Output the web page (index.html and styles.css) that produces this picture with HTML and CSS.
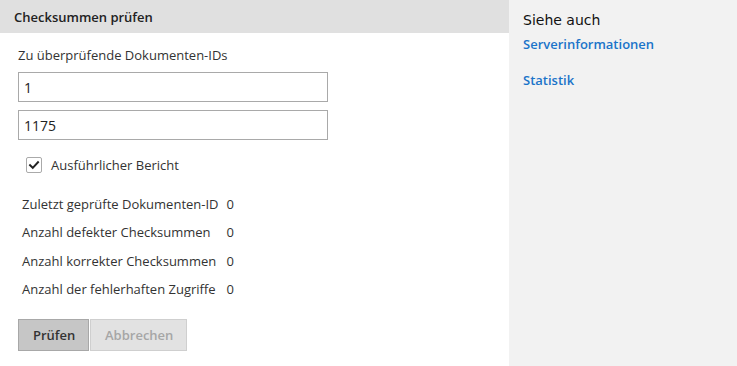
FILE: index.html
```html
<!DOCTYPE html>
<html lang="de">
<head>
<meta charset="utf-8">
<title>Checksummen prüfen</title>
<link rel="stylesheet" href="styles.css">
</head>
<body>
<div class="page">
  <main class="main">
    <header class="head">Checksummen prüfen</header>
    <div class="content">
      <div class="label">Zu überprüfende Dokumenten-IDs</div>
      <input class="field" type="text" value="1">
      <input class="field" type="text" value="1175">
      <label class="check">
        <span class="box"><svg viewBox="0 0 16 16" width="16" height="16"><path d="M3.5 8.2 L6.6 11.2 L12.6 4.8" fill="none" stroke="#222" stroke-width="2.2" stroke-linecap="square"/></svg></span>
        <span>Ausführlicher Bericht</span>
      </label>
      <div class="stats">
        <div class="stat"><span>Zuletzt geprüfte Dokumenten-ID</span><span>0</span></div>
        <div class="stat"><span>Anzahl defekter Checksummen</span><span>0</span></div>
        <div class="stat"><span>Anzahl korrekter Checksummen</span><span>0</span></div>
        <div class="stat"><span>Anzahl der fehlerhaften Zugriffe</span><span>0</span></div>
      </div>
      <div class="buttons">
        <button class="btn primary">Prüfen</button>
        <button class="btn disabled">Abbrechen</button>
      </div>
    </div>
  </main>
  <aside class="side">
    <div class="side-title">Siehe auch</div>
    <a class="link" href="#">Serverinformationen</a>
    <a class="link" href="#">Statistik</a>
  </aside>
</div>
</body>
</html>
```
FILE: styles.css
```css
html, body {
  margin: 0;
  padding: 0;
  height: 100%;
}
body {
  font-family: "Open Sans", "Noto Sans", sans-serif;
  font-size: 13px;
  color: #333;
}
.page {
  display: flex;
  height: 366px;
}
.main {
  width: 509px;
  background: #fff;
}
.head {
  height: 33px;
  background: #e0e0e0;
  padding-left: 14px;
  display: flex;
  align-items: center;
  font-weight: 600;
  color: #222;
}
.content {
  padding: 12px 0 0 18px;
  display: flex;
  flex-direction: column;
}
.label {
  height: 20px;
  line-height: 20px;
  margin-bottom: 7px;
}
.field {
  width: 310px;
  height: 30px;
  box-sizing: border-box;
  border: 1px solid #a9a9a9;
  padding: 0 5px;
  font-family: inherit;
  font-size: 14px;
  color: #222;
  margin: 0 0 8px 0;
  outline: none;
}
.check {
  display: flex;
  align-items: center;
  gap: 9px;
  margin: 8px 0 0 8px;
  height: 18px;
}
.box {
  width: 16px;
  height: 16px;
  box-sizing: border-box;
  border: 1px solid #aaa;
  border-radius: 2px;
  display: flex;
  align-items: center;
  justify-content: center;
}
.box svg { display: block; }
.stats {
  margin: 20px 0 0 4px;
  display: grid;
  grid-template-columns: max-content max-content;
  column-gap: 8px;
  row-gap: 8.3px;
}
.stat { display: contents; }
.stat span { line-height: 20px; }
.buttons {
  display: flex;
  gap: 1px;
  margin-top: 20px;
}
.btn {
  height: 32px;
  box-sizing: border-box;
  font-family: inherit;
  font-size: 13px;
  font-weight: 600;
  padding: 0 14px;
  border-radius: 0;
}
.primary {
  background: #c6c6c6;
  border: 1px solid #a8a8a8;
  color: #333;
  width: 71px;
}
.disabled {
  background: #e2e2e2;
  border: 1px solid #cfcfcf;
  color: #a6a6a6;
  width: 97px;
}
.side {
  flex: 1;
  background: #f2f2f2;
  padding: 10px 0 0 14px;
  display: flex;
  flex-direction: column;
}
.side-title {
  font-family: "DejaVu Sans", sans-serif;
  font-size: 14px;
  color: #111;
  line-height: 18px;
  margin: 1px 0 6px;
}
.link {
  color: #1b74c9;
  font-weight: 600;
  text-decoration: none;
  line-height: 18px;
}
.link + .link { margin-top: 18px; }
```
